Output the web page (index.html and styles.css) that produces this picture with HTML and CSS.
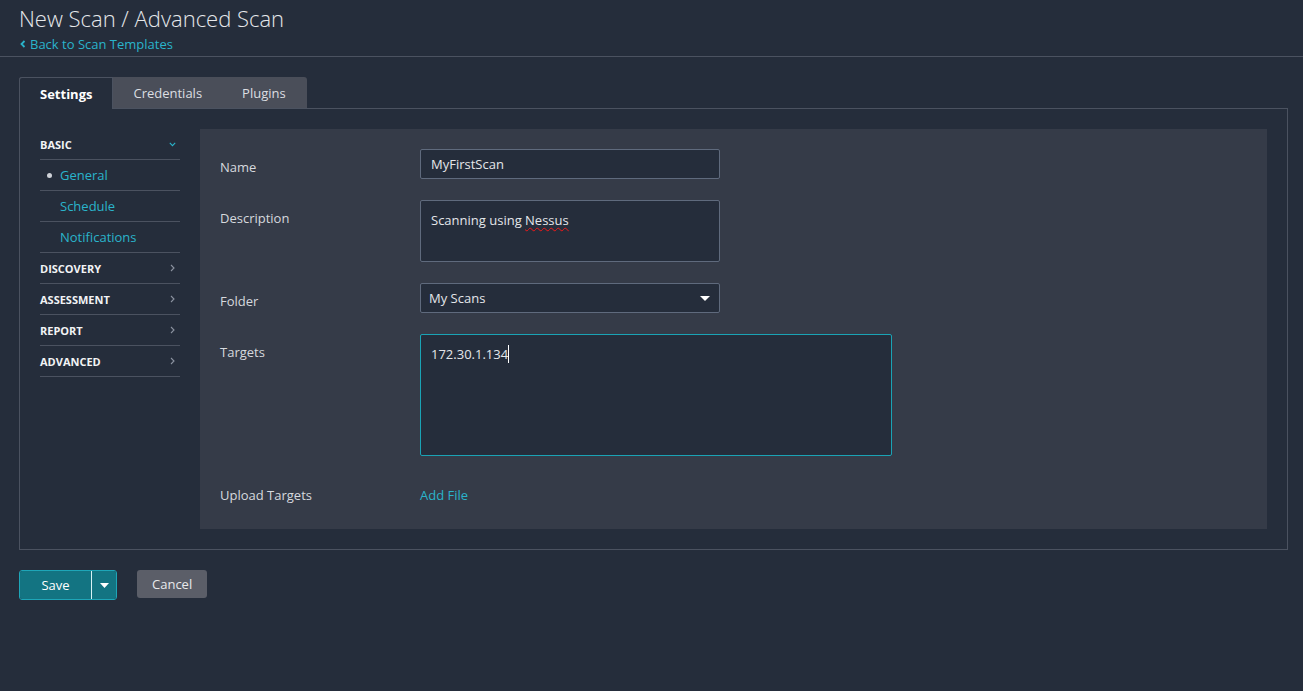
FILE: index.html
```html
<!DOCTYPE html>
<html lang="en">
<head>
  <meta charset="UTF-8" />
  <meta name="viewport" content="width=device-width, initial-scale=1.0"/>
  <title>New Scan / Advanced Scan</title>
  <link rel="stylesheet" href="styles.css">
</head>
<body>

<header class="page-head">
  <h1>New Scan / Advanced Scan</h1>
  <a href="#" class="back-link">
    <svg width="6" height="8" viewBox="0 0 6 8"><path d="M4.5 1 L1.5 4 L4.5 7" fill="none" stroke="currentColor" stroke-width="1.8"/></svg>
    Back to Scan Templates
  </a>
</header>

<main class="page-body">
  <nav class="tabs">
    <a href="#" class="tab active">Settings</a>
    <a href="#" class="tab">Credentials</a>
    <a href="#" class="tab">Plugins</a>
  </nav>

  <section class="tab-box">
    <aside class="side-menu">
      <div class="menu-group open">
        <span>Basic</span>
        <svg width="7" height="5" viewBox="0 0 7 5"><path d="M0.8 0.8 L3.5 3.6 L6.2 0.8" fill="none" stroke="currentColor" stroke-width="1.1"/></svg>
      </div>
      <a href="#" class="menu-item current">General</a>
      <a href="#" class="menu-item">Schedule</a>
      <a href="#" class="menu-item">Notifications</a>
      <div class="menu-group">
        <span>Discovery</span>
        <svg width="5" height="8" viewBox="0 0 5 8"><path d="M1 1 L4 4 L1 7" fill="none" stroke="currentColor" stroke-width="1.1"/></svg>
      </div>
      <div class="menu-group">
        <span>Assessment</span>
        <svg width="5" height="8" viewBox="0 0 5 8"><path d="M1 1 L4 4 L1 7" fill="none" stroke="currentColor" stroke-width="1.1"/></svg>
      </div>
      <div class="menu-group">
        <span>Report</span>
        <svg width="5" height="8" viewBox="0 0 5 8"><path d="M1 1 L4 4 L1 7" fill="none" stroke="currentColor" stroke-width="1.1"/></svg>
      </div>
      <div class="menu-group">
        <span>Advanced</span>
        <svg width="5" height="8" viewBox="0 0 5 8"><path d="M1 1 L4 4 L1 7" fill="none" stroke="currentColor" stroke-width="1.1"/></svg>
      </div>
    </aside>

    <div class="form-panel">
      <div class="form-row">
        <label>Name</label>
        <div class="field">MyFirstScan</div>
      </div>
      <div class="form-row">
        <label>Description</label>
        <div class="field area">Scanning using <span class="misspelled">Nessus</span></div>
      </div>
      <div class="form-row">
        <label>Folder</label>
        <div class="field select">
          My Scans
          <svg width="10" height="5" viewBox="0 0 10 5"><path d="M0 0 H10 L5 5 Z" fill="#fff"/></svg>
        </div>
      </div>
      <div class="form-row">
        <label>Targets</label>
        <div class="field targets">172.30.1.134<span class="caret"></span></div>
      </div>
      <div class="form-row upload">
        <label>Upload Targets</label>
        <a href="#" class="add-file">Add File</a>
      </div>
    </div>
  </section>

  <div class="actions">
    <div class="split-btn">
      <button class="save">Save</button>
      <button class="save-menu">
        <svg width="9" height="5" viewBox="0 0 9 5"><path d="M0 0 H9 L4.5 5 Z" fill="#fff"/></svg>
      </button>
    </div>
    <button class="cancel">Cancel</button>
  </div>
</main>

</body>
</html>
```

FILE: styles.css
```css
body {
  font-family: "Open Sans", "Noto Sans", sans-serif;
  background: #252d3b;
  color: #d6d9de;
  margin: 0;
  font-size: 13px;
}
a {
  text-decoration: none;
}

/* header */
.page-head {
  padding: 3px 19px 3px;
  border-bottom: 1px solid #4b5260;
}
.page-head h1 {
  margin: 0 0 2px;
  font-size: 22px;
  font-weight: 300;
  line-height: 30px;
  color: #e6e8eb;
}
.back-link {
  display: flex;
  align-items: center;
  gap: 4px;
  color: #2ab4cb;
  line-height: 18px;
  padding-left: 1px;
}

/* tabs */
.page-body {
  padding: 20px 15px 20px 19px;
}
.tabs {
  display: flex;
  height: 31px;
  width: max-content;
  background: #4a4e59;
  border-radius: 3px 3px 0 0;
}
.tab {
  display: flex;
  align-items: center;
  padding: 0 20px;
  color: #dcdee2;
}
.tab:last-child {
  padding-right: 21px;
}
.tab.active {
  background: #252d3b;
  color: #fff;
  font-weight: 700;
  border: 1px solid #4b5260;
  border-bottom: none;
  border-radius: 3px 0 0 0;
  padding: 0 20px;
  position: relative;
  z-index: 1;
  height: 32px;
  box-sizing: border-box;
}
.tab-box {
  display: flex;
  border: 1px solid #4b5260;
  padding: 20px;
}

/* side menu */
.side-menu {
  width: 140px;
  flex-shrink: 0;
  margin-right: 20px;
}
.menu-group {
  display: flex;
  align-items: center;
  justify-content: space-between;
  height: 30px;
  border-bottom: 1px solid #4b5260;
  font-size: 11px;
  font-weight: 700;
  text-transform: uppercase;
  color: #f2f3f5;
  padding-right: 5px;
}
.menu-group svg {
  color: #8c93a0;
}
.menu-group.open svg {
  color: #2ab4cb;
  margin-right: -1px;
}
.menu-item {
  display: block;
  position: relative;
  height: 30px;
  line-height: 30px;
  padding-left: 20px;
  border-bottom: 1px solid #4b5260;
  color: #2ab4cb;
}
.menu-item.current::before {
  content: "";
  position: absolute;
  left: 7px;
  top: 13px;
  width: 5px;
  height: 5px;
  border-radius: 50%;
  background: #cfd2d8;
}

/* form */
.form-panel {
  flex: 1;
  background: #353b48;
  padding: 20px 20px 19px;
}
.form-row {
  display: flex;
  margin-bottom: 21px;
}
.form-row label {
  width: 200px;
  flex-shrink: 0;
  padding-top: 9px;
  line-height: 18px;
}
.field {
  box-sizing: border-box;
  width: 300px;
  height: 30px;
  padding: 5px 10px;
  line-height: 18px;
  background: #252d3b;
  border: 1px solid #5f6a7d;
  border-radius: 2px;
  color: #e4e6ea;
}
.field.area {
  height: 62px;
  padding-top: 10px;
}
.misspelled {
  text-decoration: underline wavy #f01818;
  text-decoration-thickness: 1px;
  text-underline-offset: 2px;
}
.field.select {
  display: flex;
  align-items: center;
  justify-content: space-between;
  padding: 0 9px 0 8px;
}
.field.targets {
  width: 472px;
  height: 122px;
  padding-top: 10px;
  border-color: #1aa3b5;
}
.caret {
  display: inline-block;
  width: 1px;
  height: 18px;
  background: #fff;
  vertical-align: top;
}
.form-row.upload {
  margin: 24px 0 0;
  height: 30px;
  align-items: center;
}
.form-row.upload label {
  padding-top: 0;
}
.add-file {
  color: #2ab4cb;
}

/* buttons */
.actions {
  display: flex;
  align-items: flex-start;
  gap: 20px;
  margin-top: 20px;
}
button {
  font-family: inherit;
  font-size: 13px;
  cursor: pointer;
}
.split-btn {
  display: flex;
  height: 30px;
  border: 1px solid #1ea6b8;
  border-radius: 3px;
  box-sizing: border-box;
  overflow: hidden;
}
.split-btn button {
  background: #137482;
  color: #fff;
  border: none;
}
.save {
  width: 71px;
}
.save-menu {
  width: 25px;
  border-left: 1px solid #d9f2f5 !important;
  display: flex;
  align-items: center;
  justify-content: center;
  padding: 0;
}
.cancel {
  height: 28px;
  padding: 0 15px;
  background: #5b5e68;
  color: #e8e9eb;
  border: none;
  border-radius: 3px;
}
```
